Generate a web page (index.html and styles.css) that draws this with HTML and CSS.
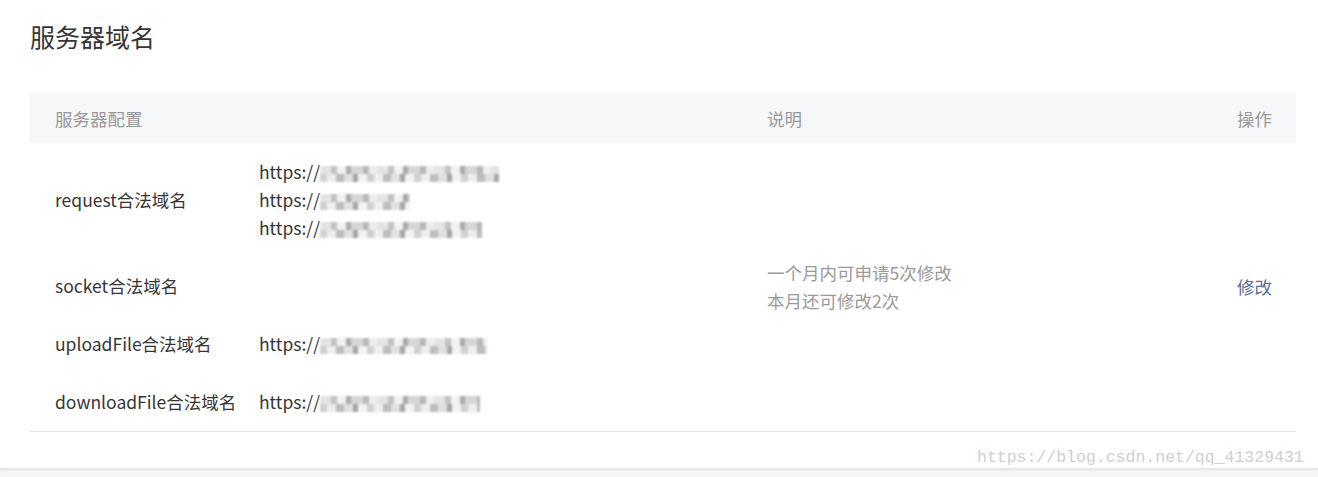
FILE: index.html
```html
<!DOCTYPE html>
<html lang="zh-CN">
<head>
    <meta charset="UTF-8">
    <meta name="viewport" content="width=device-width, initial-scale=1.0">
    <title>服务器域名</title>
    <link rel="stylesheet" href="styles.css">
</head>
<body>
    <div class="card">
        <h2 class="title">服务器域名</h2>
        <table class="domains">
            <colgroup>
                <col class="col-name">
                <col class="col-url">
                <col class="col-desc">
                <col class="col-op">
            </colgroup>
            <thead>
                <tr>
                    <th colspan="2">服务器配置</th>
                    <th>说明</th>
                    <th class="op">操作</th>
                </tr>
            </thead>
            <tbody>
                <tr>
                    <td class="name">request合法域名</td>
                    <td class="url">
                        <div>https://<span class="mask m1"></span></div>
                        <div>https://<span class="mask m2"></span></div>
                        <div>https://<span class="mask m3"></span></div>
                    </td>
                    <td class="desc" rowspan="4">一个月内可申请5次修改<br>本月还可修改2次</td>
                    <td class="op" rowspan="4"><a href="#">修改</a></td>
                </tr>
                <tr>
                    <td class="name">socket合法域名</td>
                    <td class="url"></td>
                </tr>
                <tr>
                    <td class="name">uploadFile合法域名</td>
                    <td class="url"><div>https://<span class="mask m4"></span></div></td>
                </tr>
                <tr class="last">
                    <td class="name">downloadFile合法域名</td>
                    <td class="url"><div>https://<span class="mask m5"></span></div></td>
                </tr>
            </tbody>
        </table>
    </div>
    <div class="watermark">https://blog.csdn.net/qq_41329431</div>
</body>
</html>
```

FILE: styles.css
```css
body { margin: 0; background: #f4f5f7; font-family: "Noto Sans CJK SC", "Noto Sans", sans-serif; color: #353535; position: relative; min-height: 477px; }
.card { background: #fff; padding: 20px 22px 36px 30px; box-shadow: 0 1px 2px rgba(0, 0, 0, 0.08); border-bottom: 1px solid #e6e7ea; }
.title { margin: 0 0 41px; font-size: 25px; line-height: 32px; font-weight: normal; color: #353535; }
.domains { width: 1266px; border-collapse: collapse; table-layout: fixed; font-size: 17.5px; }
.col-name { width: 229px; }
.col-url { width: 483px; }
.col-desc { width: 434px; }
.col-op { width: 120px; }
.domains th { background: #f6f7f9; height: 50px; padding: 0 0 0 25px; text-align: left; font-weight: normal; color: #9a9a9a; }
.domains th.op { text-align: right; padding: 0 24px 0 0; }
.domains td { padding: 15px 0 15px 25px; line-height: 28px; vertical-align: middle; }
.domains td.url { padding-left: 0; white-space: nowrap; }
.domains td.desc { color: #9a9a9a; }
.domains td.op { text-align: right; padding: 0 24px 0 0; }
.domains td.op a { color: #576b95; text-decoration: none; }
.domains tbody { border-bottom: 1px solid #e7e7e7; }
.mask { display: inline-block; height: 16px; vertical-align: -3px; filter: blur(0.8px); background:
    repeating-linear-gradient(90deg, #e4e4e4 0 11px, #c2c2c2 11px 17px, #f2f2f2 17px 26px, #aaaaaa 26px 31px, #d6d6d6 31px 43px, #b8b8b8 43px 49px, #ededed 49px 57px) top / 100% 8px no-repeat,
    repeating-linear-gradient(90deg, #d0d0d0 0 7px, #eeeeee 7px 16px, #bdbdbd 16px 24px, #e0e0e0 24px 33px, #a5a5a5 33px 38px, #f3f3f3 38px 47px) bottom / 100% 8px no-repeat; }
.m1 { width: 179px; }
.m2 { width: 90px; }
.m3 { width: 162px; }
.m4 { width: 167px; }
.m5 { width: 160px; }
.watermark { position: absolute; left: 977px; top: 448px; font-family: "Liberation Mono", monospace; font-size: 16.5px; color: #cfcfcf; }
```
